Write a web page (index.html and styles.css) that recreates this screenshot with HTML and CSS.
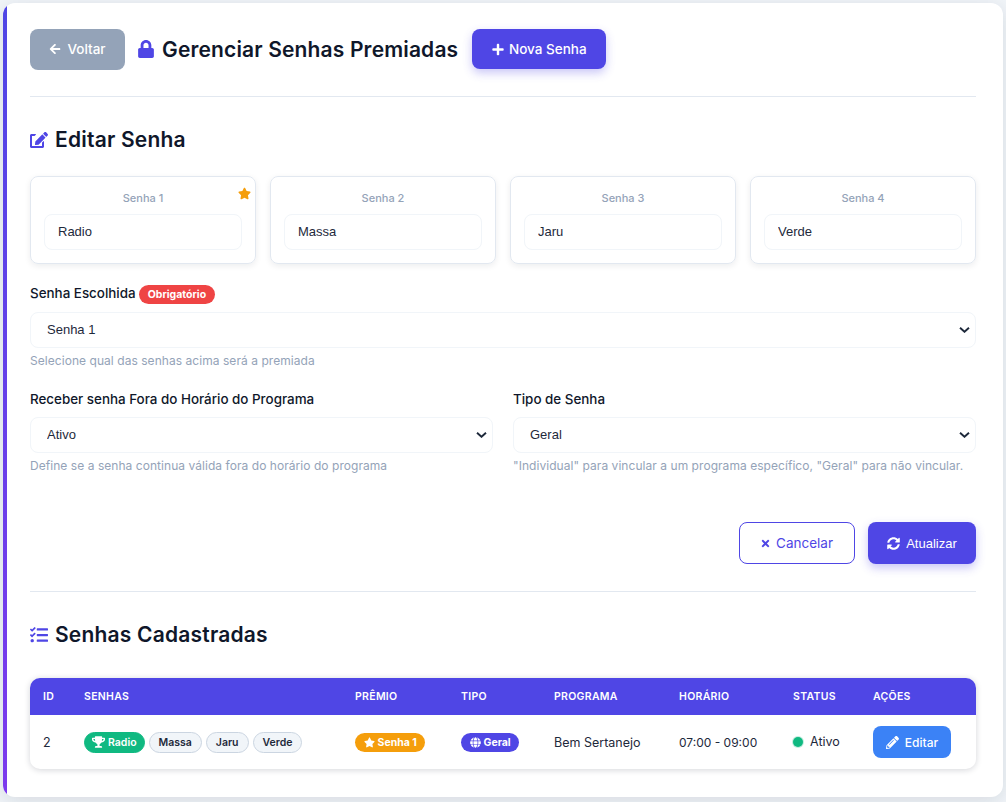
FILE: index.html
```html
<!DOCTYPE html>
<html lang="en">

<head>
    <meta charset="UTF-8">
    <meta name="viewport" content="width=device-width, initial-scale=1.0">
    <title>Gerenciar Senhas Premiadas</title>
    <link rel="stylesheet" href="styles.css">
</head>

<body>

    <div class="container">

        <div class="page-header">
            <a class="btn btn-back">
                <svg class="ico" viewBox="0 0 448 512"><path d="M257.5 445.1l-22.2 22.2c-9.4 9.4-24.6 9.4-33.9 0L7 273c-9.4-9.4-9.4-24.6 0-33.9L201.4 44.7c9.4-9.4 24.6-9.4 33.9 0l22.2 22.2c9.5 9.5 9.3 25-.4 34.3L136.6 216H424c13.3 0 24 10.7 24 24v32c0 13.3-10.7 24-24 24H136.6l120.5 114.8c9.8 9.3 10 24.8.4 34.3z"/></svg>
                Voltar
            </a>
            <h1>
                <svg class="ico" viewBox="0 0 448 512"><path d="M400 224h-24v-72C376 68.2 307.8 0 224 0S72 68.2 72 152v72H48c-26.5 0-48 21.5-48 48v192c0 26.5 21.5 48 48 48h352c26.5 0 48-21.5 48-48V272c0-26.5-21.5-48-48-48zm-104 0H152v-72c0-39.7 32.3-72 72-72s72 32.3 72 72v72z"/></svg>
                Gerenciar Senhas Premiadas
            </h1>
            <a class="btn btn-new">
                <svg class="ico" viewBox="0 0 448 512"><path d="M416 208H272V64c0-17.67-14.33-32-32-32h-32c-17.67 0-32 14.33-32 32v144H32c-17.67 0-32 14.33-32 32v32c0 17.67 14.33 32 32 32h144v144c0 17.67 14.33 32 32 32h32c17.67 0 32-14.33 32-32V304h144c17.67 0 32-14.33 32-32v-32c0-17.67-14.33-32-32-32z"/></svg>
                Nova Senha
            </a>
        </div>

        <h2 class="section-title">
            <svg class="ico" viewBox="0 0 576 512"><path d="M402.6 83.2l90.2 90.2c3.8 3.8 3.8 10 0 13.8L274.4 405.6l-92.8 10.3c-12.4 1.4-22.9-9.1-21.5-21.5l10.3-92.8L388.8 83.2c3.8-3.8 10-3.8 13.8 0zm162-22.9l-48.8-48.8c-15.2-15.2-39.9-15.2-55.2 0l-35.4 35.4c-3.8 3.8-3.8 10 0 13.8l90.2 90.2c3.8 3.8 10 3.8 13.8 0l35.4-35.4c15.2-15.3 15.2-40 0-55.2zM384 346.2V448H64V128h73.1c3.2 0 6.2-1.3 8.5-3.5l40-40c7.6-7.6 2.2-20.5-8.5-20.5H48C21.5 64 0 85.5 0 112v352c0 26.5 21.5 48 48 48h352c26.5 0 48-21.5 48-48V306.2c0-10.7-12.9-16-20.5-8.5l-40 40c-2.2 2.3-3.5 5.3-3.5 8.5z"/></svg>
            Editar Senha
        </h2>

        <div class="password-grid">
            <div class="password-card">
                <svg class="ico card-star" viewBox="0 0 576 512"><path d="M259.3 17.8L194 150.2 47.9 171.5c-26.2 3.8-36.7 36.1-17.7 54.6l105.7 103-25 145.5c-4.5 26.3 23.2 46 46.4 33.7L288 439.6l130.7 68.7c23.2 12.2 50.9-7.4 46.4-33.7l-25-145.5 105.7-103c19-18.5 8.5-50.8-17.7-54.6L382 150.2 316.7 17.8c-11.7-23.6-45.6-23.9-57.4 0z"/></svg>
                <div class="card-label">Senha 1</div>
                <input class="field" type="text" value="Radio">
            </div>
            <div class="password-card">
                <div class="card-label">Senha 2</div>
                <input class="field" type="text" value="Massa">
            </div>
            <div class="password-card">
                <div class="card-label">Senha 3</div>
                <input class="field" type="text" value="Jaru">
            </div>
            <div class="password-card">
                <div class="card-label">Senha 4</div>
                <input class="field" type="text" value="Verde">
            </div>
        </div>

        <div class="form-group group-chosen">
            <label class="form-label">Senha Escolhida <span class="badge-required">Obrigatório</span></label>
            <select class="field">
                <option>Senha 1</option>
            </select>
            <small class="help">Selecione qual das senhas acima será a premiada</small>
        </div>

        <div class="form-row">
            <div class="form-group">
                <label class="form-label">Receber senha Fora do Horário do Programa</label>
                <select class="field">
                    <option>Ativo</option>
                </select>
                <small class="help">Define se a senha continua válida fora do horário do programa</small>
            </div>
            <div class="form-group">
                <label class="form-label">Tipo de Senha</label>
                <select class="field">
                    <option>Geral</option>
                </select>
                <small class="help">"Individual" para vincular a um programa específico, "Geral" para não vincular.</small>
            </div>
        </div>

        <div class="form-actions">
            <button class="btn btn-cancel">
                <svg class="ico" viewBox="0 0 352 512"><path d="M242.72 256l100.07-100.07c12.28-12.28 12.28-32.19 0-44.48l-22.24-22.24c-12.28-12.28-32.19-12.28-44.48 0L176 189.28 75.93 89.21c-12.28-12.28-32.19-12.28-44.48 0L9.21 111.45c-12.28 12.28-12.28 32.19 0 44.48L109.28 256 9.21 356.07c-12.28 12.28-12.28 32.19 0 44.48l22.24 22.24c12.28 12.28 32.2 12.28 44.48 0L176 322.72l100.07 100.07c12.28 12.28 32.2 12.28 44.48 0l22.24-22.24c12.28-12.28 12.28-32.19 0-44.48L242.72 256z"/></svg>
                Cancelar
            </button>
            <button class="btn btn-save">
                <svg class="ico" viewBox="0 0 512 512"><path d="M370.72 133.28C339.458 104.008 298.888 87.962 255.848 88c-77.458.068-144.328 53.178-162.791 126.85-1.344 5.363-6.122 9.15-11.651 9.15H24.103c-7.498 0-13.194-6.807-11.807-14.176C33.933 94.924 134.813 8 256 8c66.448 0 126.791 26.136 171.315 68.685L463.03 40.97C478.149 25.851 504 36.559 504 57.941V192c0 13.255-10.745 24-24 24H345.941c-21.382 0-32.09-25.851-16.971-40.971l41.75-41.749zM32 296h134.059c21.382 0 32.09 25.851 16.971 40.971l-41.75 41.75c31.262 29.273 71.835 45.319 114.876 45.28 77.418-.07 144.315-53.144 162.787-126.849 1.344-5.363 6.122-9.15 11.651-9.15h57.304c7.498 0 13.194 6.807 11.807 14.176C478.067 417.076 377.187 504 256 504c-66.448 0-126.791-26.136-171.315-68.685L48.97 471.03C33.851 486.149 8 475.441 8 454.059V320c0-13.255 10.745-24 24-24z"/></svg>
                Atualizar
            </button>
        </div>

        <h2 class="section-title list-title">
            <svg class="ico" viewBox="0 0 512 512"><path d="M139.61 35.5a12 12 0 0 0-17 0L58.93 98.81l-22.7-22.12a12 12 0 0 0-17 0L3.53 92.41a12 12 0 0 0 0 17l47.59 47.4a12.78 12.78 0 0 0 17.61 0l15.59-15.62L156.52 69a12.09 12.09 0 0 0 .09-17zm0 159.19a12 12 0 0 0-17 0l-63.68 63.72-22.7-22.1a12 12 0 0 0-17 0L3.53 252a12 12 0 0 0 0 17L51 316.5a12.77 12.77 0 0 0 17.6 0l15.7-15.69 72.2-72.22a12 12 0 0 0 .09-16.9zM64 368c-26.49 0-48.59 21.5-48.59 48S37.53 464 64 464a48 48 0 0 0 0-96zm432 16H208a16 16 0 0 0-16 16v32a16 16 0 0 0 16 16h288a16 16 0 0 0 16-16v-32a16 16 0 0 0-16-16zm0-320H208a16 16 0 0 0-16 16v32a16 16 0 0 0 16 16h288a16 16 0 0 0 16-16V80a16 16 0 0 0-16-16zm0 160H208a16 16 0 0 0-16 16v32a16 16 0 0 0 16 16h288a16 16 0 0 0 16-16v-32a16 16 0 0 0-16-16z"/></svg>
            Senhas Cadastradas
        </h2>

        <div class="table-wrap">
            <table>
                <thead>
                    <tr>
                        <th class="col-id">ID</th>
                        <th class="col-senhas">Senhas</th>
                        <th class="col-premio">Prêmio</th>
                        <th class="col-tipo">Tipo</th>
                        <th class="col-programa">Programa</th>
                        <th class="col-horario">Horário</th>
                        <th class="col-status">Status</th>
                        <th class="col-acoes">Ações</th>
                    </tr>
                </thead>
                <tbody>
                    <tr>
                        <td>2</td>
                        <td>
                            <div class="chips">
                                <span class="chip chip-winner">
                                    <svg class="ico" viewBox="0 0 576 512"><path d="M552 64H448V24c0-13.3-10.7-24-24-24H152c-13.3 0-24 10.7-24 24v40H24C10.7 64 0 74.7 0 88v56c0 35.7 22.5 72.4 61.9 100.7 31.5 22.7 69.8 37.1 110 41.7C203.3 338.5 240 360 240 360v72h-48c-35.3 0-64 20.7-64 56v12c0 6.6 5.4 12 12 12h296c6.6 0 12-5.4 12-12v-12c0-35.3-28.7-56-64-56h-48v-72s36.7-21.5 68.1-73.6c40.3-4.6 78.6-19 110-41.7 39.3-28.3 61.9-65 61.9-100.7V88c0-13.3-10.7-24-24-24zM99.3 192.8C74.9 175.2 64 155.6 64 144v-16h64.2c1 32.6 5.8 61.2 12.8 86.2-15.1-5.2-29.2-12.4-41.7-21.4zM512 144c0 16.1-17.7 36.1-35.3 48.8-12.5 9-26.7 16.2-41.8 21.4 7-25 11.8-53.6 12.8-86.2H512v16z"/></svg>
                                    Radio
                                </span>
                                <span class="chip">Massa</span>
                                <span class="chip">Jaru</span>
                                <span class="chip">Verde</span>
                            </div>
                        </td>
                        <td>
                            <span class="tag tag-prize">
                                <svg class="ico" viewBox="0 0 576 512"><path d="M259.3 17.8L194 150.2 47.9 171.5c-26.2 3.8-36.7 36.1-17.7 54.6l105.7 103-25 145.5c-4.5 26.3 23.2 46 46.4 33.7L288 439.6l130.7 68.7c23.2 12.2 50.9-7.4 46.4-33.7l-25-145.5 105.7-103c19-18.5 8.5-50.8-17.7-54.6L382 150.2 316.7 17.8c-11.7-23.6-45.6-23.9-57.4 0z"/></svg>
                                Senha 1
                            </span>
                        </td>
                        <td>
                            <span class="tag tag-type">
                                <svg class="ico" viewBox="0 0 496 512"><path d="M336.5 160C322 70.7 287.8 8 248 8s-74 62.7-88.5 152h177zM152 256c0 22.2 1.2 43.5 3.3 64h185.3c2.1-20.5 3.3-41.8 3.3-64s-1.2-43.5-3.3-64H155.3c-2.1 20.5-3.3 41.8-3.3 64zm324.7-96c-28.6-67.9-86.5-120.4-158-141.6 24.4 33.8 41.2 84.7 50 141.6h108zM177.2 18.4C105.8 39.6 47.8 92.1 19.3 160h108c8.7-56.9 25.5-107.8 49.9-141.6zM487.4 192H372.7c2.1 21 3.3 42.5 3.3 64s-1.2 43-3.3 64h114.6c5.5-20.5 8.6-41.8 8.6-64s-3.1-43.5-8.5-64zM120 256c0-21.5 1.2-43 3.3-64H8.6C3.2 212.5 0 233.8 0 256s3.2 43.5 8.6 64h114.6c-2-21-3.2-42.5-3.2-64zm39.5 96c14.5 89.3 48.7 152 88.5 152s74-62.7 88.5-152h-177zm159.3 141.6c71.4-21.2 129.4-73.7 158-141.6h-108c-8.8 56.9-25.6 107.8-50 141.6zM19.3 352c28.6 67.9 86.5 120.4 158 141.6-24.4-33.8-41.2-84.7-50-141.6h-108z"/></svg>
                                Geral
                            </span>
                        </td>
                        <td>Bem Sertanejo</td>
                        <td class="cell-time">07:00 - 09:00</td>
                        <td>
                            <span class="status"><span class="status-dot"></span>Ativo</span>
                        </td>
                        <td>
                            <a class="btn btn-edit">
                                <svg class="ico" viewBox="0 0 512 512"><path d="M497.9 142.1l-46.1 46.1c-4.7 4.7-12.3 4.7-17 0l-111-111c-4.7-4.7-4.7-12.3 0-17l46.1-46.1c18.7-18.7 49.1-18.7 67.9 0l60.1 60.1c18.8 18.7 18.8 49.1 0 67.9zM284.2 99.8L21.6 362.4.4 483.9c-2.9 16.4 11.4 30.6 27.8 27.8l121.5-21.3 262.6-262.6c4.7-4.7 4.7-12.3 0-17l-111-111c-4.8-4.7-12.4-4.7-17.1 0zM124.1 339.9c-5.5-5.5-5.5-14.3 0-19.8l154-154c5.5-5.5 14.3-5.5 19.8 0s5.5 14.3 0 19.8l-154 154c-5.5 5.5-14.3 5.5-19.8 0zM88 424h48v36.3l-64.5 11.3-31.1-31.1L51.7 376H88v48z"/></svg>
                                Editar
                            </a>
                        </td>
                    </tr>
                </tbody>
            </table>
        </div>

    </div>

</body>

</html>
```
FILE: styles.css
```css
html, body {
    height: 100%;
}

body {
    font-family: Inter, "Open Sans", sans-serif;
    background-color: #f1f5f9;
    color: #0f172a;
    margin: 0;
    padding: 3px 3px 5px 3px;
    box-sizing: border-box;
    overflow: hidden;
}

* {
    box-sizing: border-box;
}

.container {
    position: relative;
    height: 794px;
    background: white;
    padding: 26px 27px 0 27px;
    border-radius: 12px;
    box-shadow: 0px 4px 20px rgba(15, 23, 42, 0.12);
    overflow: hidden;
}

/* gradient strip down the left side */
.container::before {
    content: "";
    position: absolute;
    left: 0;
    top: 0;
    bottom: 0;
    width: 4px;
    background: linear-gradient(180deg, #4f46e5, #7c3aed);
}

.ico {
    width: 1em;
    height: 1em;
    fill: currentColor;
    flex-shrink: 0;
}

.btn {
    display: inline-flex;
    align-items: center;
    justify-content: center;
    font-family: inherit;
    font-size: 13.5px;
    font-weight: 500;
    border: none;
    border-radius: 8px;
    cursor: pointer;
}

.page-header {
    display: flex;
    align-items: center;
    height: 68px;
    padding-bottom: 27px;
    border-bottom: 1px solid #e2e8f0;
}

.btn-back {
    width: 95px;
    height: 41px;
    gap: 6px;
    background: #94a3b8;
    color: white;
}

.btn-back .ico {
    width: 12px;
    height: 12px;
}

.page-header h1 {
    display: flex;
    align-items: center;
    gap: 8px;
    margin: 0 14px 0 13px;
    font-size: 21px;
    font-weight: 600;
    letter-spacing: 0.15px;
    white-space: nowrap;
}

.page-header h1 .ico {
    color: #4f46e5;
    width: 16px;
    height: 18px;
}

.btn-new {
    width: 134px;
    height: 40px;
    gap: 5px;
    background: #4f46e5;
    color: white;
    box-shadow: 0px 4px 10px rgba(79, 70, 229, 0.3);
}

.btn-new .ico {
    width: 12px;
    height: 13px;
}

.section-title {
    display: flex;
    align-items: center;
    gap: 7px;
    margin: 29px 0 22px 0;
    font-size: 21px;
    line-height: 28px;
    font-weight: 600;
    letter-spacing: 0.2px;
}

.section-title .ico {
    color: #4f46e5;
    width: 18px;
    height: 18px;
}

.password-grid {
    display: grid;
    grid-template-columns: repeat(4, 1fr);
    gap: 14px;
}

.password-card {
    position: relative;
    height: 88px;
    padding: 13px 13px;
    border: 1px solid #e2e8f0;
    border-radius: 8px;
    box-shadow: 0px 2px 6px rgba(15, 23, 42, 0.08);
}

.card-star {
    position: absolute;
    top: 10px;
    right: 4px;
    width: 13px;
    height: 13px;
    color: #f59e0b;
}

.card-label {
    text-align: center;
    font-size: 11px;
    font-weight: 500;
    line-height: 16px;
    color: #94a3b8;
    margin-bottom: 8px;
}

.field {
    display: block;
    width: 100%;
    height: 36px;
    padding: 0 13px 2px 13px;
    font-family: "Liberation Sans", Arial, sans-serif;
    font-size: 13px;
    color: #1e293b;
    background: white;
    border: 1px solid #f1f5f9;
    border-radius: 8px;
    outline: none;
}

select.field {
    appearance: none;
    background: white url("data:image/svg+xml,%3Csvg xmlns='http://www.w3.org/2000/svg' viewBox='0 0 11 6'%3E%3Cpath d='M1 .8 5.5 4.8 10 .8' fill='none' stroke='%231e293b' stroke-width='1.9'/%3E%3C/svg%3E") no-repeat right 5px center / 11px 6px;
    padding-left: 16px;
}

.form-group {
    display: flex;
    flex-direction: column;
    min-width: 0;
}

.group-chosen {
    margin-top: 19px;
}

.form-label {
    font-size: 13.4px;
    font-weight: 500;
    line-height: 20px;
    color: #0f172a;
    margin-bottom: 8px;
}

.badge-required {
    display: inline-block;
    padding: 0 8.5px;
    line-height: 19px;
    font-size: 10.5px;
    font-weight: 700;
    color: white;
    background: #ef4444;
    border-radius: 10px;
}

.help {
    font-size: 12px;
    letter-spacing: 0.05px;
    line-height: 16px;
    color: #94a3b8;
    margin-top: 5px;
}

.form-row {
    display: grid;
    grid-template-columns: 1fr 1fr;
    gap: 20px;
    margin-top: 20px;
}

.form-actions {
    display: flex;
    justify-content: flex-end;
    gap: 13px;
    margin-top: 48px;
    padding-bottom: 27px;
    border-bottom: 1px solid #e2e8f0;
}

.btn-cancel {
    width: 116px;
    height: 42px;
    gap: 6px;
    font-weight: 400;
    background: white;
    color: #4f46e5;
    border: 1px solid #4f46e5;
}

.btn-cancel .ico {
    width: 9px;
    height: 11px;
}

.btn-save {
    width: 108px;
    height: 42px;
    gap: 6px;
    font-family: "Liberation Sans", Arial, sans-serif;
    font-size: 13px;
    font-weight: 400;
    background: #4f46e5;
    color: white;
    box-shadow: 0px 4px 10px rgba(79, 70, 229, 0.3);
}

.btn-save .ico {
    width: 13px;
    height: 13px;
}

.list-title {
    margin: 29px 0 29px 0;
}

.table-wrap {
    border-radius: 10px;
    overflow: hidden;
    box-shadow: 0px 1px 6px rgba(15, 23, 42, 0.18);
}

table {
    width: 100%;
    border-collapse: collapse;
    table-layout: fixed;
}

th {
    height: 37px;
    padding: 0 13px;
    text-align: left;
    font-size: 10.5px;
    font-weight: 600;
    letter-spacing: 0.3px;
    text-transform: uppercase;
    color: white;
    background: #4f46e5;
}

td {
    height: 54px;
    padding: 0 13px;
    font-size: 12.5px;
    color: #1e293b;
}

td.cell-time {
    font-size: 12px;
}

.col-id { width: 41px; }
.col-senhas { width: 271px; }
.col-premio { width: 106px; }
.col-tipo { width: 93px; }
.col-programa { width: 125px; }
.col-horario { width: 114px; }
.col-status { width: 80px; }
.col-acoes { width: 116px; }

.chips {
    display: flex;
    align-items: center;
    gap: 4px;
}

.chip {
    display: inline-flex;
    align-items: center;
    gap: 3px;
    height: 21px;
    padding: 0 9px;
    font-size: 10.5px;
    font-weight: 600;
    color: #1e293b;
    background: #f1f5f9;
    border: 1px solid #cbd5e1;
    border-radius: 11px;
}

.chip-winner {
    padding: 0 7px;
    color: white;
    background: #10b981;
    border-color: #10b981;
}

.chip-winner .ico {
    width: 13px;
    height: 12px;
}

.tag {
    display: inline-flex;
    align-items: center;
    gap: 3px;
    height: 19px;
    padding: 0 8.5px;
    font-size: 10.5px;
    font-weight: 700;
    color: white;
    border-radius: 10px;
    white-space: nowrap;
}

.tag .ico {
    width: 11px;
    height: 11px;
}

.tag-prize {
    background: #f59e0b;
}

.tag-type {
    background: #4f46e5;
}

.status {
    display: inline-flex;
    align-items: center;
    gap: 7px;
}

.status-dot {
    width: 10px;
    height: 10px;
    border-radius: 50%;
    background: #10b981;
    box-shadow: 0 0 0 1px rgba(16, 185, 129, 0.25);
}

.btn-edit {
    width: 78px;
    height: 32px;
    gap: 6px;
    font-size: 12px;
    color: white;
    background: #3b82f6;
}

.btn-edit .ico {
    width: 13px;
    height: 13px;
}
```
